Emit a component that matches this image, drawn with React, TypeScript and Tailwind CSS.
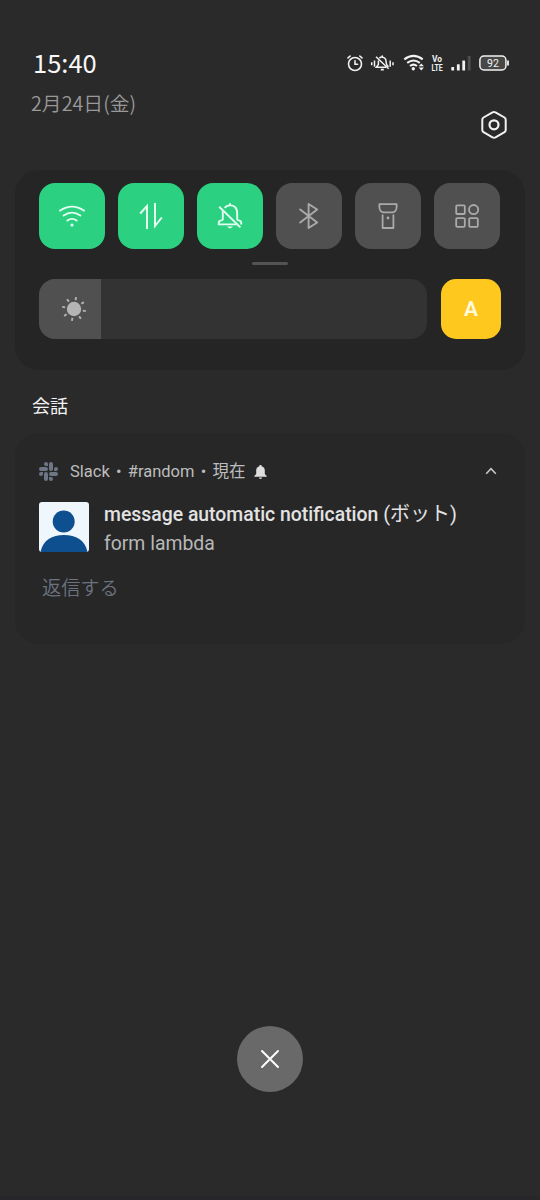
import React from "react";

const WifiIcon = () => (
  <svg width="28" height="24" viewBox="0 0 28 24" fill="none" stroke="#e3fff1" strokeWidth="1.9" strokeLinecap="round">
    <path d="M2 6.6 Q14 -1.4 26 6.6" />
    <path d="M5.6 11.6 Q14 5.6 22.4 11.6" />
    <path d="M9.4 16.6 Q14 13.2 18.6 16.6" />
    <circle cx="14" cy="21" r="1.6" fill="#e3fff1" stroke="none" />
  </svg>
);

const DataIcon = () => (
  <svg width="26" height="28" viewBox="0 0 26 28" fill="none" stroke="#e3fff1" strokeWidth="2">
    <path d="M2.2 11.5 L9 4 V27" />
    <path d="M17 1 V24 L23.8 15.5" />
  </svg>
);

const MutedIcon = () => (
  <svg width="28" height="28" viewBox="0 0 28 28" fill="none" stroke="#e3fff1" strokeWidth="1.9">
    <path d="M6.8 8.5 V17.5 C6.8 18.6 2.8 18.2 2.8 20.2 V22.4 H22" />
    <path d="M8.6 5.8 C11 3 16 2.4 19 5 C21.4 7.2 21.2 9.5 21.2 12 V17.5 C21.2 18.6 25.2 18.2 25.2 20.2 V22.6" />
    <path d="M14 1.2 V4" />
    <path d="M3.2 4.8 L24.4 25.4" />
    <path d="M11 24.6 Q14 28.2 17 24.6 Z" fill="#e3fff1" stroke="none" />
  </svg>
);

const BluetoothIcon = () => (
  <svg width="22" height="28" viewBox="0 0 22 28" fill="none" stroke="#aaa" strokeWidth="1.9" strokeLinejoin="round">
    <path d="M1.5 7 L19.2 20.5 L10.6 26 V2 L19.2 7.5 L1.5 21" />
  </svg>
);

const TorchIcon = () => (
  <svg width="22" height="28" viewBox="0 0 22 28" fill="none" stroke="#aaa" strokeWidth="1.8" strokeLinejoin="round">
    <path d="M2.4 2.2 H19.6 V5 C19.6 8 18 10.3 15.5 10.3 H6.5 C4 10.3 2.4 8 2.4 5 Z" />
    <path d="M5.6 12.5 V26 H16.4 V12.5" />
    <circle cx="11" cy="16" r="1.4" fill="#aaa" stroke="none" />
  </svg>
);

const AppsIcon = () => (
  <svg width="26" height="26" viewBox="0 0 26 26" fill="none" stroke="#aaa" strokeWidth="1.8">
    <rect x="2.2" y="2.4" width="8.6" height="8.6" rx="1" />
    <circle cx="19.6" cy="6.6" r="4.6" />
    <rect x="2.2" y="15.2" width="8.6" height="8.6" rx="1" />
    <rect x="15.2" y="15.2" width="8.6" height="8.6" rx="1" />
  </svg>
);

const StatusIcons = () => (
  <svg width="166" height="20" viewBox="0 0 166 20" fill="none" stroke="#f2f2f2">
    {/* alarm */}
    <g strokeWidth="1.6" strokeLinecap="round">
      <circle cx="10" cy="11" r="6.5" />
      <path d="M10 7.8 V11.3 H12.6" />
      <path d="M3 4.9 L5.2 3 M17 4.9 L14.8 3" />
    </g>
    {/* muted bell with vibration */}
    <g strokeWidth="1.5">
      <path d="M33.4 7.4 V11.4 L31.3 14.2 H41" />
      <path d="M34.4 5.2 C36 3.4 39.6 3.8 40.7 6.4 C41.2 8 41 10.5 41.9 12 L43.4 14" />
      <path d="M37.3 2.4 V4.4" />
      <path d="M31 3.8 L43.6 15.8" />
      <path d="M35.8 16.6 H38.8" strokeWidth="1.8" />
      <path d="M26.7 9.2 V12.2 M29.5 7.4 V13.8 M45.2 7.4 V13.8 M48 9.2 V12.2" />
    </g>
    {/* wifi */}
    <g strokeWidth="2.1">
      <path d="M59.3 6.4 Q68.5 -.6 77.7 6.4" />
      <path d="M62.2 9.8 Q68.5 5.2 74.8 9.8" />
      <path d="M65 13 Q68.5 10.3 72 13" />
      <circle cx="68.3" cy="15.8" r="1.7" fill="#f2f2f2" stroke="none" />
      <path d="M73.7 13.2 L76.3 10.4 L78.9 13.2 Z M73.7 14.6 L76.3 17.4 L78.9 14.6 Z" fill="#f2f2f2" stroke="none" />
    </g>
    {/* signal */}
    <g fill="#f2f2f2" stroke="none">
      <rect x="106.3" y="14" width="2.8" height="3.6" rx=".6" />
      <rect x="111.9" y="11.2" width="2.8" height="6.4" rx=".6" />
      <rect x="117.3" y="7.4" width="2.8" height="10.2" rx=".6" />
      <rect x="122.8" y="3" width="2.8" height="14.6" rx=".6" fill="#505050" />
    </g>
    {/* battery */}
    <rect x="134.9" y="3" width="26" height="14" rx="4" fill="#474747" strokeWidth="1.5" />
    <path d="M163 7.5 V12.5" strokeWidth="1.8" />
    <g fill="#f2f2f2" stroke="none">
      <text fontFamily="Roboto" fontWeight="700" fontSize="9.5">
        <tspan x="87" y="9" textLength="10" lengthAdjust="spacingAndGlyphs">Vo</tspan>
        <tspan x="86.5" y="18" textLength="11.2" lengthAdjust="spacingAndGlyphs">LTE</tspan>
      </text>
      <text x="147.9" y="13.7" textAnchor="middle" fontFamily="Roboto" fontSize="10.5">92</text>
    </g>
  </svg>
);

const SettingsIcon = () => (
  <svg width="28" height="30" viewBox="0 0 28 30" fill="none" stroke="#f2f2f2" strokeWidth="2">
    <path d="M12.5 2.4 Q14 1.7 15.5 2.4 L24.5 7.5 Q25.7 8.3 25.7 9.7 V20 Q25.7 21.4 24.5 22.2 L15.5 27.3 Q14 28 12.5 27.3 L3.5 22.2 Q2.3 21.4 2.3 20 V9.7 Q2.3 8.3 3.5 7.5 Z" strokeLinejoin="round" />
    <circle cx="14" cy="14.8" r="4.5" strokeWidth="2.2" />
  </svg>
);

const SunIcon = () => (
  <svg width="26" height="26" viewBox="0 0 26 26" stroke="#b4b4b4" strokeWidth="1.9">
    <circle cx="13" cy="13" r="7.2" fill="#b4b4b4" stroke="none" />
    {[10, 55, 100, 145, 190, 235, 280, 325].map((angle) => (
      <path key={angle} d="M13 1 V4" transform={`rotate(${angle} 13 13)`} />
    ))}
  </svg>
);

const SlackIcon = () => (
  <svg width="19" height="19" viewBox="0 0 24 24" fill="#6e7686">
    <path d="M5.042 15.165a2.528 2.528 0 0 1-2.52 2.523A2.528 2.528 0 0 1 0 15.165a2.527 2.527 0 0 1 2.522-2.52h2.52v2.52zM6.313 15.165a2.527 2.527 0 0 1 2.521-2.52 2.527 2.527 0 0 1 2.521 2.52v6.313A2.528 2.528 0 0 1 8.834 24a2.528 2.528 0 0 1-2.521-2.522v-6.313zM8.834 5.042a2.528 2.528 0 0 1-2.521-2.52A2.528 2.528 0 0 1 8.834 0a2.528 2.528 0 0 1 2.521 2.522v2.52H8.834zM8.834 6.313a2.528 2.528 0 0 1 2.521 2.521 2.528 2.528 0 0 1-2.521 2.521H2.522A2.528 2.528 0 0 1 0 8.834a2.528 2.528 0 0 1 2.522-2.521h6.312zM18.956 8.834a2.528 2.528 0 0 1 2.522-2.521A2.528 2.528 0 0 1 24 8.834a2.528 2.528 0 0 1-2.522 2.521h-2.522V8.834zM17.688 8.834a2.528 2.528 0 0 1-2.523 2.521 2.527 2.527 0 0 1-2.52-2.521V2.522A2.527 2.527 0 0 1 15.165 0a2.528 2.528 0 0 1 2.523 2.522v6.312zM15.165 18.956a2.528 2.528 0 0 1 2.523 2.522A2.528 2.528 0 0 1 15.165 24a2.527 2.527 0 0 1-2.52-2.522v-2.522h2.52zM15.165 17.688a2.527 2.527 0 0 1-2.52-2.523 2.526 2.526 0 0 1 2.52-2.52h6.313A2.527 2.527 0 0 1 24 15.165a2.528 2.528 0 0 1-2.522 2.523h-6.313z" />
  </svg>
);

const tiles = [
  { name: "wifi", icon: <WifiIcon />, active: true },
  { name: "data", icon: <DataIcon />, active: true },
  { name: "mute", icon: <MutedIcon />, active: true },
  { name: "bluetooth", icon: <BluetoothIcon />, active: false },
  { name: "torch", icon: <TorchIcon />, active: false },
  { name: "apps", icon: <AppsIcon />, active: false },
];

const App: React.FC = () => {
  return (
    <main className="flex h-[1200px] w-[540px] flex-col overflow-hidden border-b-4 border-[#272628] bg-[#2a2a2a] font-['Roboto','Noto_Sans_CJK_JP',sans-serif]">
      {/* Header */}
      <header className="flex h-[170px] shrink-0 justify-between pt-[47px] pr-[26px] pl-[31px]">
        <div className="flex flex-col font-['Noto_Sans_CJK_JP',sans-serif]">
          <time className="ml-[2px] h-[30px] text-[25.5px] leading-[30px] text-[#f8f8f8]">15:40</time>
          <span className="mt-[12px] text-[19.8px] leading-[28px] font-[350] text-[#999]">2月24日(金)</span>
        </div>
        <div className="flex flex-col items-end pt-[6px]">
          <div className="mr-[3px]">
            <StatusIcons />
          </div>
          <button className="mt-[37px] mr-[6.5px]">
            <SettingsIcon />
          </button>
        </div>
      </header>

      {/* Quick settings */}
      <section className="mx-[15px] h-[200px] shrink-0 rounded-[24px] bg-[#252525] px-6 pt-[13px]">
        <div className="flex gap-[13px]">
          {tiles.map((tile) => (
            <button
              key={tile.name}
              className={`flex size-[66px] shrink-0 items-center justify-center rounded-[16px] ${
                tile.active ? "bg-[#2bd181]" : "bg-[#505050]"
              }`}
            >
              {tile.icon}
            </button>
          ))}
        </div>
        <div className="mx-auto mt-[13px] h-[3px] w-9 rounded-full bg-[#535353]" />
        <div className="mt-[14px] flex gap-[14px]">
          <div className="flex h-[60px] w-[388px] overflow-hidden rounded-[16px] bg-[#333]">
            <div className="flex w-[62px] items-center justify-end bg-[#505050] pr-[14px]">
              <SunIcon />
            </div>
          </div>
          <button className="flex size-[60px] items-center justify-center rounded-[15px] bg-[#ffc81e] pt-[1px] text-[21px] font-semibold text-[#fffbe0]">
            A
          </button>
        </div>
      </section>

      <h2 className="mt-[22px] ml-[32px] h-[30px] text-[18px] leading-[30px] text-[#f2f2f2]">会話</h2>

      {/* Notification */}
      <article className="mx-[15px] mt-[11px] h-[211px] shrink-0 rounded-[24px] bg-[#272727] px-6 pt-[24px]">
        <div className="flex h-[28px] items-center">
          <SlackIcon />
          <p className="mt-[2px] ml-[12px] flex text-[16.5px] text-[#bdbdbd]">
            <span>Slack</span>
            <span className="w-[18px] text-center">•</span>
            <span>#random</span>
            <span className="w-[18px] text-center">•</span>
            <span>現在</span>
          </p>
          <svg className="mt-[2px] ml-[8px]" width="13" height="14" viewBox="0 0 13 14" fill="#dedede">
            <path d="M6.5 0 C7.3 0 7.7 .5 7.7 1.2 C9.8 1.8 10.8 3.5 10.8 5.5 V9 L12.7 11 V11.8 H.3 V11 L2.2 9 V5.5 C2.2 3.5 3.2 1.8 5.3 1.2 C5.3 .5 5.7 0 6.5 0 Z M5 12.5 H8 Q7.7 14 6.5 14 Q5.3 14 5 12.5 Z" />
          </svg>
          <svg className="mr-[4px] ml-auto" width="12" height="8" viewBox="0 0 12 8" fill="none" stroke="#c8c8c8" strokeWidth="1.6">
            <path d="M1.2 6.7 L6 1.7 L10.8 6.7" />
          </svg>
        </div>
        <div className="mt-[17px] flex gap-[15px]">
          <svg className="rounded-[3px]" width="50" height="50" viewBox="0 0 50 50">
            <rect width="50" height="50" fill="#f0f7fc" />
            <circle cx="24.7" cy="19.5" r="11" fill="#0e4f90" />
            <path d="M1.5 50 C4 38 13 33 25 33 C37 33 46 38 48.5 50 Z" fill="#0e4f90" />
          </svg>
          <div className="text-[19.4px]">
            <h3 className="h-[28px] leading-[25px] font-medium whitespace-nowrap text-[#e2e2e2]">
              message automatic notification <span className="text-[20px] font-normal">(ボット)</span>
            </h3>
            <p className="leading-[27px] text-[#b8b8b8]">form lambda</p>
          </div>
        </div>
        <button className="mt-[17px] ml-[3px] block text-[19.2px] leading-[30px] font-[350] text-[#6b7280]">返信する</button>
      </article>

      <button className="mx-auto mt-[382px] flex size-[66px] shrink-0 items-center justify-center rounded-full bg-[#696969]">
        <svg width="20" height="20" viewBox="0 0 20 20" stroke="#fff" strokeWidth="2" strokeLinecap="round">
          <path d="M2 2 L18 18 M18 2 L2 18" />
        </svg>
      </button>
    </main>
  );
};

export default App;
